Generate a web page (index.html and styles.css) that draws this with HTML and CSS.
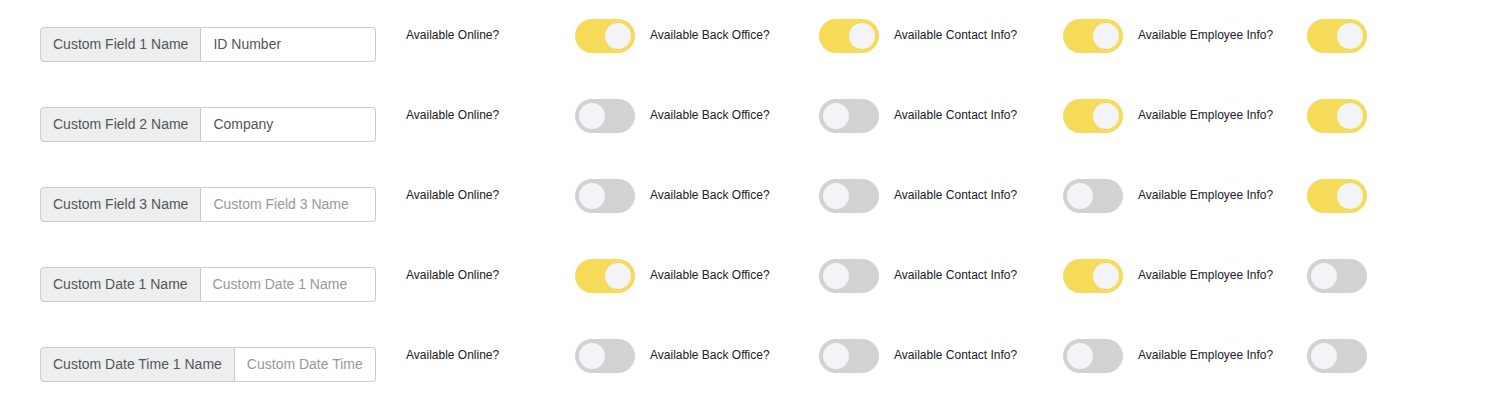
FILE: index.html
```html
<!DOCTYPE html>
<html lang="en">
<head>
    <meta charset="UTF-8">
    <title>Custom Fields</title>
    <link rel="stylesheet" href="styles.css">
</head>
<body>
    <div class="fields">
        <div class="field-row">
            <div class="input-group">
                <span class="addon">Custom Field 1 Name</span>
                <input type="text" value="ID Number" placeholder="Custom Field 1 Name">
            </div>
            <div class="switch-col"><span class="switch-label">Available Online?</span><label class="switch"><input type="checkbox" checked><span class="slider"></span></label></div>
            <div class="switch-col"><span class="switch-label">Available Back Office?</span><label class="switch"><input type="checkbox" checked><span class="slider"></span></label></div>
            <div class="switch-col"><span class="switch-label">Available Contact Info?</span><label class="switch"><input type="checkbox" checked><span class="slider"></span></label></div>
            <div class="switch-col"><span class="switch-label">Available Employee Info?</span><label class="switch"><input type="checkbox" checked><span class="slider"></span></label></div>
        </div>
        <div class="field-row">
            <div class="input-group">
                <span class="addon">Custom Field 2 Name</span>
                <input type="text" value="Company" placeholder="Custom Field 2 Name">
            </div>
            <div class="switch-col"><span class="switch-label">Available Online?</span><label class="switch"><input type="checkbox"><span class="slider"></span></label></div>
            <div class="switch-col"><span class="switch-label">Available Back Office?</span><label class="switch"><input type="checkbox"><span class="slider"></span></label></div>
            <div class="switch-col"><span class="switch-label">Available Contact Info?</span><label class="switch"><input type="checkbox" checked><span class="slider"></span></label></div>
            <div class="switch-col"><span class="switch-label">Available Employee Info?</span><label class="switch"><input type="checkbox" checked><span class="slider"></span></label></div>
        </div>
        <div class="field-row">
            <div class="input-group">
                <span class="addon">Custom Field 3 Name</span>
                <input type="text" placeholder="Custom Field 3 Name">
            </div>
            <div class="switch-col"><span class="switch-label">Available Online?</span><label class="switch"><input type="checkbox"><span class="slider"></span></label></div>
            <div class="switch-col"><span class="switch-label">Available Back Office?</span><label class="switch"><input type="checkbox"><span class="slider"></span></label></div>
            <div class="switch-col"><span class="switch-label">Available Contact Info?</span><label class="switch"><input type="checkbox"><span class="slider"></span></label></div>
            <div class="switch-col"><span class="switch-label">Available Employee Info?</span><label class="switch"><input type="checkbox" checked><span class="slider"></span></label></div>
        </div>
        <div class="field-row">
            <div class="input-group">
                <span class="addon">Custom Date 1 Name</span>
                <input type="text" placeholder="Custom Date 1 Name">
            </div>
            <div class="switch-col"><span class="switch-label">Available Online?</span><label class="switch"><input type="checkbox" checked><span class="slider"></span></label></div>
            <div class="switch-col"><span class="switch-label">Available Back Office?</span><label class="switch"><input type="checkbox"><span class="slider"></span></label></div>
            <div class="switch-col"><span class="switch-label">Available Contact Info?</span><label class="switch"><input type="checkbox" checked><span class="slider"></span></label></div>
            <div class="switch-col"><span class="switch-label">Available Employee Info?</span><label class="switch"><input type="checkbox"><span class="slider"></span></label></div>
        </div>
        <div class="field-row">
            <div class="input-group">
                <span class="addon">Custom Date Time 1 Name</span>
                <input type="text" placeholder="Custom Date Time 1 Name">
            </div>
            <div class="switch-col"><span class="switch-label">Available Online?</span><label class="switch"><input type="checkbox"><span class="slider"></span></label></div>
            <div class="switch-col"><span class="switch-label">Available Back Office?</span><label class="switch"><input type="checkbox"><span class="slider"></span></label></div>
            <div class="switch-col"><span class="switch-label">Available Contact Info?</span><label class="switch"><input type="checkbox"><span class="slider"></span></label></div>
            <div class="switch-col"><span class="switch-label">Available Employee Info?</span><label class="switch"><input type="checkbox"><span class="slider"></span></label></div>
        </div>
    </div>
</body>
</html>
```

FILE: styles.css
```css
* { margin: 0; padding: 0; box-sizing: border-box; }
body {
    font-family: 'Liberation Sans', Arial, sans-serif;
    background: #fff;
    color: #333;
}
.fields {
    padding: 18px 0 0 40px;
}
.field-row {
    display: flex;
    align-items: flex-start;
    margin-bottom: 36px;
}
.input-group {
    display: flex;
    width: 336px;
    height: 35px;
    margin-top: 9px;
    margin-right: 30px;
    font-size: 14px;
}
.addon {
    display: flex;
    align-items: center;
    padding: 0 12px 1px 12px;
    background: #eceeef;
    color: #555;
    border: 1px solid #ccc;
    border-radius: 4px 0 0 4px;
    white-space: nowrap;
}
.input-group input {
    flex: 1;
    min-width: 0;
    padding: 0 12px 1px 12px;
    border: 1px solid #ccc;
    border-left: none;
    border-radius: 0 4px 4px 0;
    font-family: inherit;
    font-size: 14px;
    color: #555;
}
.input-group input::placeholder { color: #999; }
.switch-col {
    display: flex;
    align-items: center;
    height: 35px;
    margin-right: 15px;
}
.switch-label {
    width: 169px;
    font-size: 12px;
    color: #222;
    padding-bottom: 1px;
}
.switch {
    position: relative;
    display: block;
    width: 60px;
    height: 34px;
    margin-top: 1px;
}
.switch input { display: none; }
.slider {
    display: block;
    width: 100%;
    height: 100%;
    border-radius: 17px;
    background: #d2d2d2;
}
.slider::before {
    content: "";
    position: absolute;
    top: 4px;
    left: 4px;
    width: 26px;
    height: 26px;
    border-radius: 50%;
    background: #f3f4f8;
}
.switch input:checked + .slider { background: #f6da5a; }
.switch input:checked + .slider::before { left: 30px; }
```
